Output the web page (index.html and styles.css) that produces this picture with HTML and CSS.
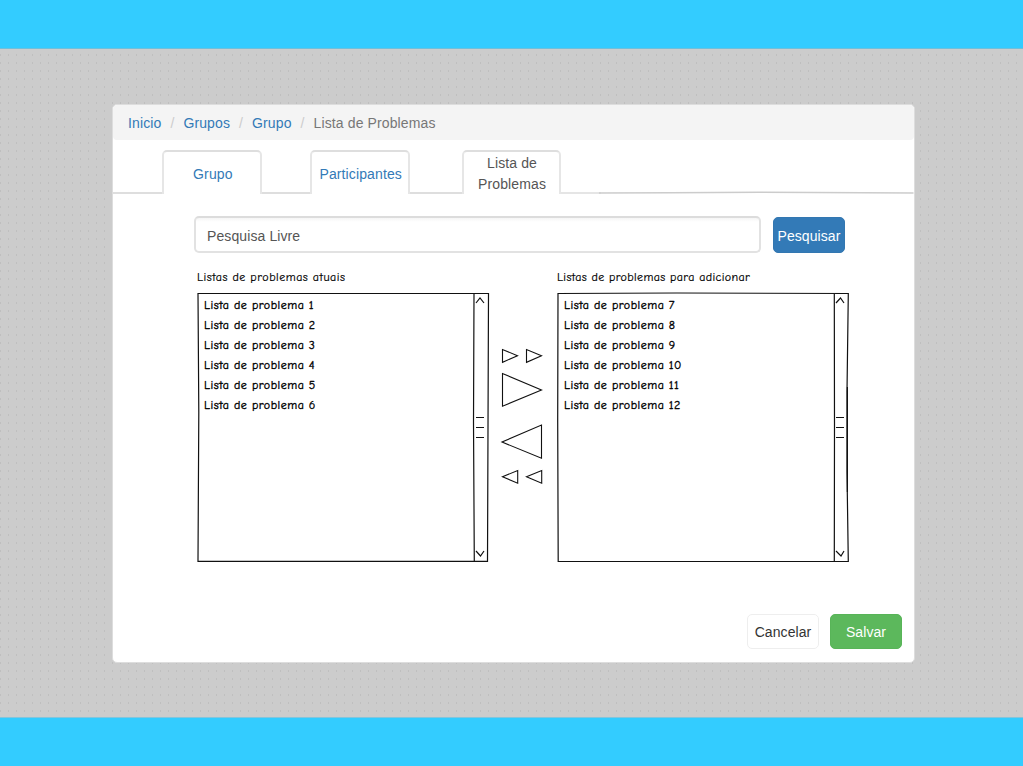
FILE: index.html
```html
<!DOCTYPE html>
<html lang="pt-BR">
<head>
<meta charset="utf-8">
<title>Lista de Problemas</title>
<link rel="stylesheet" href="styles.css">
</head>
<body>
<header class="bar bar-top"></header>
<main class="stage">
  <section class="panel">
    <nav class="breadcrumb">
      <a href="#">Inicio</a><span class="sep">/</span><a href="#">Grupos</a><span class="sep">/</span><a href="#">Grupo</a><span class="sep">/</span><span class="current">Lista de Problemas</span>
    </nav>
    <div class="tabs">
      <span class="rule rule-start"></span>
      <a class="tab" href="#">Grupo</a>
      <span class="rule rule-a"></span>
      <a class="tab" href="#">Participantes</a>
      <span class="rule rule-b"></span>
      <a class="tab active" href="#">Lista de Problemas</a>
      <svg class="rule-end" viewBox="0 0 353 4"><path d="M0 3H40" stroke="#ddd"/><path d="M38 3L110 2.700L200 2.200L353 3" stroke="#ccc"/></svg>
    </div>
    <form class="search">
      <input class="field" type="text" value="Pesquisa Livre">
      <button class="btn primary" type="button">Pesquisar</button>
    </form>
    <div class="picker">
      <div class="column">
        <h2 class="label">Listas de problemas atuais</h2>
        <div class="listbox">
          <svg class="frame" viewBox="0 0 293 271"><path d="M1 1.500H291.500L290.500 269.300L1 269.300L1.800 120ZM277 1.500L276.500 130L277.300 269.300"/><path d="M279 11L283 6L287 11M279 259L283.500 264L287 259M279 125.500h8M279 135.500h8M279 145.500h8"/></svg>
          <ul class="items"><li>Lista de problema 1</li><li>Lista de problema 2</li><li>Lista de problema 3</li><li>Lista de problema 4</li><li>Lista de problema 5</li><li>Lista de problema 6</li></ul>
        </div>
      </div>
      <svg class="arrows" viewBox="0 0 44 140"><path d="M3.500 7.500V20.300L18.500 13.700ZM27.500 7.500V20.300L42.500 13.700ZM3.500 31.500V64.200L42.500 48ZM42.500 83V116.300L3 100ZM18.700 128.500V141.200L3.500 134.800ZM42.700 128.500V141.200L27.500 134.800Z"/></svg>
      <div class="column">
        <h2 class="label label-add">Listas de problemas para adicionar</h2>
        <div class="listbox">
          <svg class="frame" viewBox="0 0 293 271"><path d="M1 1.500L120 1L291.300 1.500L290 100V180L291.300 269.500H1.200L.7 130ZM277.300 1.500L277.500 130L277.300 269.500"/><path d="M290.400 95V200M279 11L283.500 6L287 11M279 259L284 264L287 259M279 125.500h8M279 135.500h8M279 145.500h8"/></svg>
          <ul class="items"><li>Lista de problema 7</li><li>Lista de problema 8</li><li>Lista de problema 9</li><li>Lista de problema 10</li><li>Lista de problema 11</li><li>Lista de problema 12</li></ul>
        </div>
      </div>
    </div>
    <footer class="actions">
      <button class="btn plain" type="button">Cancelar</button>
      <button class="btn success" type="button">Salvar</button>
    </footer>
  </section>
</main>
<div class="bar bar-bottom"></div>
</body>
</html>
```
FILE: styles.css
```css
* { box-sizing: border-box; }
body {
  margin: 0;
  height: 766px;
  display: flex;
  flex-direction: column;
  overflow: hidden;
  font: 14px/21px "Liberation Sans", Arial, sans-serif;
  letter-spacing: .12px;
  color: #555;
  background: #ccc;
}
a { color: #337ab7; text-decoration: none; }
.bar { background: #3cf; flex: none; }
.bar-top { height: 49px; border-bottom: 1px solid #70bfda; }
.bar-bottom { height: 49px; border-top: 1px solid #83c5dc; }
.stage {
  flex: 1;
  padding: 55px 108px 54px 112px;
  background: conic-gradient(from 270deg at 1px 2px, #bfbfbf 90deg, transparent 90deg) 0 5px / 8px 8px, #ccc;
}
.panel {
  width: 803px;
  height: 559px;
  display: flex;
  flex-direction: column;
  background: #fff;
  border: 1px solid #ddd;
  border-radius: 5px;
  overflow: hidden;
}
.breadcrumb {
  height: 35px;
  flex: none;
  display: flex;
  align-items: center;
  padding: 2px 15px 0;
  background: #f4f4f4;
  border-radius: 4px;
}
.sep { width: 22px; text-align: center; color: #ccc; }
.current { color: #777; }
.tabs {
  height: 54px;
  flex: none;
  display: flex;
  align-items: flex-end;
}
.tab {
  width: 100px;
  height: 44px;
  display: flex;
  align-items: center;
  justify-content: center;
  text-align: center;
  padding: 2px 0 0 2px;
  border: 2px solid #e6e6e6;
  border-top-color: #dedede;
  border-bottom: 0;
  border-radius: 5px 5px 0 0;
}
.active { color: #555; padding: 2px 10px 0 11px; }
.rule { border-bottom: 2px solid #dedede; }
.rule-start { width: 49px; }
.rule-a { width: 48px; }
.rule-b { width: 52px; }
.rule-end { width: 353px; height: 4px; fill: none; stroke-width: 1.500; }
.search {
  display: flex;
  gap: 12px;
  flex: none;
  margin: 22px 0 0 81px;
}
.field {
  width: 567px;
  height: 37px;
  padding: 3px 11px 0;
  font: inherit;
  letter-spacing: .1px;
  color: #555;
  background: linear-gradient(#f5f5f5, #fff 4px);
  border: 2px solid #e2e2e2;
  border-top-color: #dcdcdc;
  border-radius: 5px;
}
.btn {
  width: 72px;
  height: 36px;
  padding: 2px 0 0;
  font: inherit;
  letter-spacing: .08px;
  border-radius: 5px;
  white-space: nowrap;
}
.primary { align-self: flex-end; color: #fff; background: #337ab7; border: 1px solid #3377b1; }
.plain { height: 35px; color: #333; background: #fff; border: 1px solid #eee; }
.success { height: 35px; color: #fff; background: #5cb85c; border: 1px solid #58b458; }
.picker {
  display: flex;
  align-items: flex-start;
  margin: 14px 0 0 84px;
  font: 500 12px/20px "Comic Sans MS", "Comic Neue", "Noto Sans", sans-serif;
  letter-spacing: .5px;
  color: #000;
  -webkit-text-stroke: .35px #000;
}
.column { width: 293px; }
.label { margin: 0 0 5px; font: inherit; white-space: nowrap; -webkit-text-stroke-width: .2px; }
.label-add { letter-spacing: .36px; }
.listbox { position: relative; height: 271px; padding: 3px 0 0 7px; }
.frame {
  position: absolute;
  inset: 0;
  width: 293px;
  height: 271px;
  fill: none;
  stroke: #111;
  stroke-width: 1.200;
}
.items { list-style: none; margin: 0; padding: 0; }
.arrows {
  width: 44px;
  height: 140px;
  margin: 75px 14px 0 9px;
  overflow: visible;
  fill: none;
  stroke: #111;
  stroke-width: 1.100;
}
.actions {
  display: flex;
  justify-content: flex-end;
  gap: 11px;
  margin-top: auto;
  padding: 0 12px 13px 0;
}
```
